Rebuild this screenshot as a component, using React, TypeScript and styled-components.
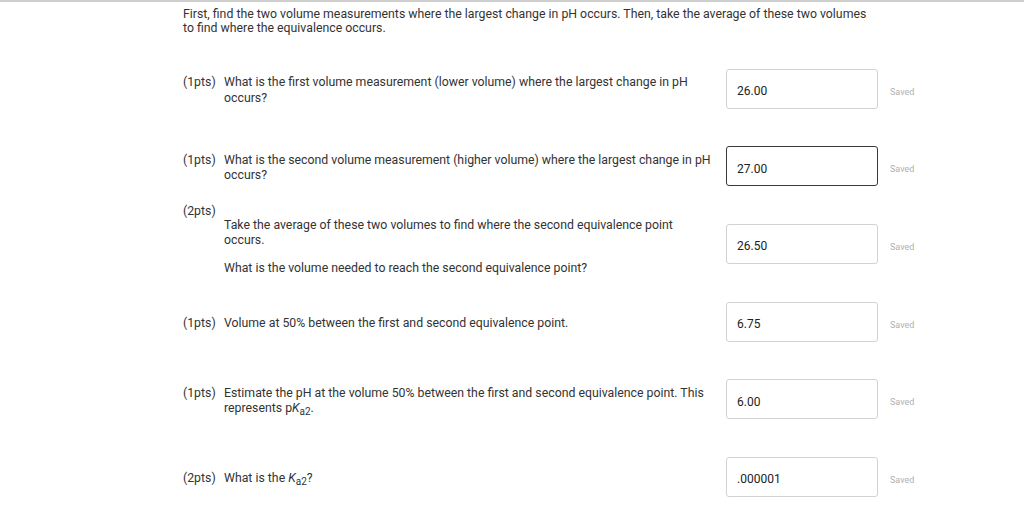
import React, { FC, ReactNode } from 'react';
import styled, { createGlobalStyle, css } from 'styled-components';

const GlobalStyle = createGlobalStyle`
  html, body {
    margin: 0;
    padding: 0;
    background: #ffffff;
  }

  body {
    font-family: Roboto, "Liberation Sans", Arial, sans-serif;
    color: #333333;
  }
`;

const Page = styled.div`
  border-top: 2px solid #cfcfcf;
  padding: 5px 0 0 183px;
  box-sizing: border-box;
  width: 1024px;
  height: 506px;
  overflow: hidden;
`;

const Intro = styled.p`
  margin: 0 0 15px;
  width: 690px;
  font-size: 12.3px;
  line-height: 14px;
`;

const Row = styled.div`
  display: flex;
  align-items: center;
  height: 77.6px;
`;

const Prompt = styled.div<{ stacked?: boolean }>`
  display: flex;
  width: 531px;
  font-size: 12.3px;
  line-height: 15.5px;
  padding-top: 4px;

  ${(props) =>
    props.stacked &&
    css`
      flex-direction: column;
      padding-top: 0;
      margin-top: -7px;
    `}
`;

const Points = styled.span<{ stacked?: boolean }>`
  flex: ${(props) => (props.stacked ? 'none' : '0 0 41px')};
  line-height: ${(props) => (props.stacked ? '13px' : 'inherit')};
`;

const Question = styled.div<{ indent?: boolean }>`
  width: 490px;
  margin-left: ${(props) => (props.indent ? '41px' : '0')};

  p {
    margin: 0 0 12px;
  }

  p:last-child {
    margin-bottom: 0;
  }
`;

const Sub = styled.sub`
  font-size: 10px;
  vertical-align: -3px;
  line-height: 0;
`;

const Answer = styled.div<{ focused?: boolean }>`
  display: flex;
  align-items: center;
  box-sizing: border-box;
  width: 152px;
  height: 40px;
  margin-left: 12px;
  padding: 5px 10px 0;
  border: 1px solid ${(props) => (props.focused ? '#3a3a3a' : '#d2d2d2')};
  border-radius: 3px;
  font-size: 12px;
  color: #222222;
`;

const Saved = styled.span`
  margin: 6px 0 0 12px;
  font-size: 9px;
  color: #b0b0b0;
`;

const Ka: FC<{ prefix?: string }> = ({ prefix }) => (
  <>
    {prefix}
    <i>K</i>
    <Sub>a2</Sub>
  </>
);

type Item = {
  points: string;
  value: string;
  focused?: boolean;
  stacked?: boolean;
  body: ReactNode;
};

const items: Item[] = [
  {
    points: '(1pts)',
    value: '26.00',
    body: 'What is the first volume measurement (lower volume) where the largest change in pH occurs?'
  },
  {
    points: '(1pts)',
    value: '27.00',
    focused: true,
    body: 'What is the second volume measurement (higher volume) where the largest change in pH occurs?'
  },
  {
    points: '(2pts)',
    value: '26.50',
    stacked: true,
    body: (
      <>
        <p>Take the average of these two volumes to find where the second equivalence point occurs.</p>
        <p>What is the volume needed to reach the second equivalence point?</p>
      </>
    )
  },
  {
    points: '(1pts)',
    value: '6.75',
    body: 'Volume at 50% between the first and second equivalence point.'
  },
  {
    points: '(1pts)',
    value: '6.00',
    body: (
      <>
        Estimate the pH at the volume 50% between the first and second equivalence point. This
        represents <Ka prefix="p" />.
      </>
    )
  },
  {
    points: '(2pts)',
    value: '.000001',
    body: (
      <>
        What is the <Ka />?
      </>
    )
  }
];

export default function App() {
  return (
    <>
      <GlobalStyle />
      <Page>
        <Intro>
          First, find the two volume measurements where the largest change in pH occurs. Then, take
          the average of these two volumes to find where the equivalence occurs.
        </Intro>
        {items.map((item, index) => (
          <Row key={index}>
            <Prompt stacked={item.stacked}>
              <Points stacked={item.stacked}>{item.points}</Points>
              <Question indent={item.stacked}>{item.body}</Question>
            </Prompt>
            <Answer focused={item.focused}>{item.value}</Answer>
            <Saved>Saved</Saved>
          </Row>
        ))}
      </Page>
    </>
  );
}
